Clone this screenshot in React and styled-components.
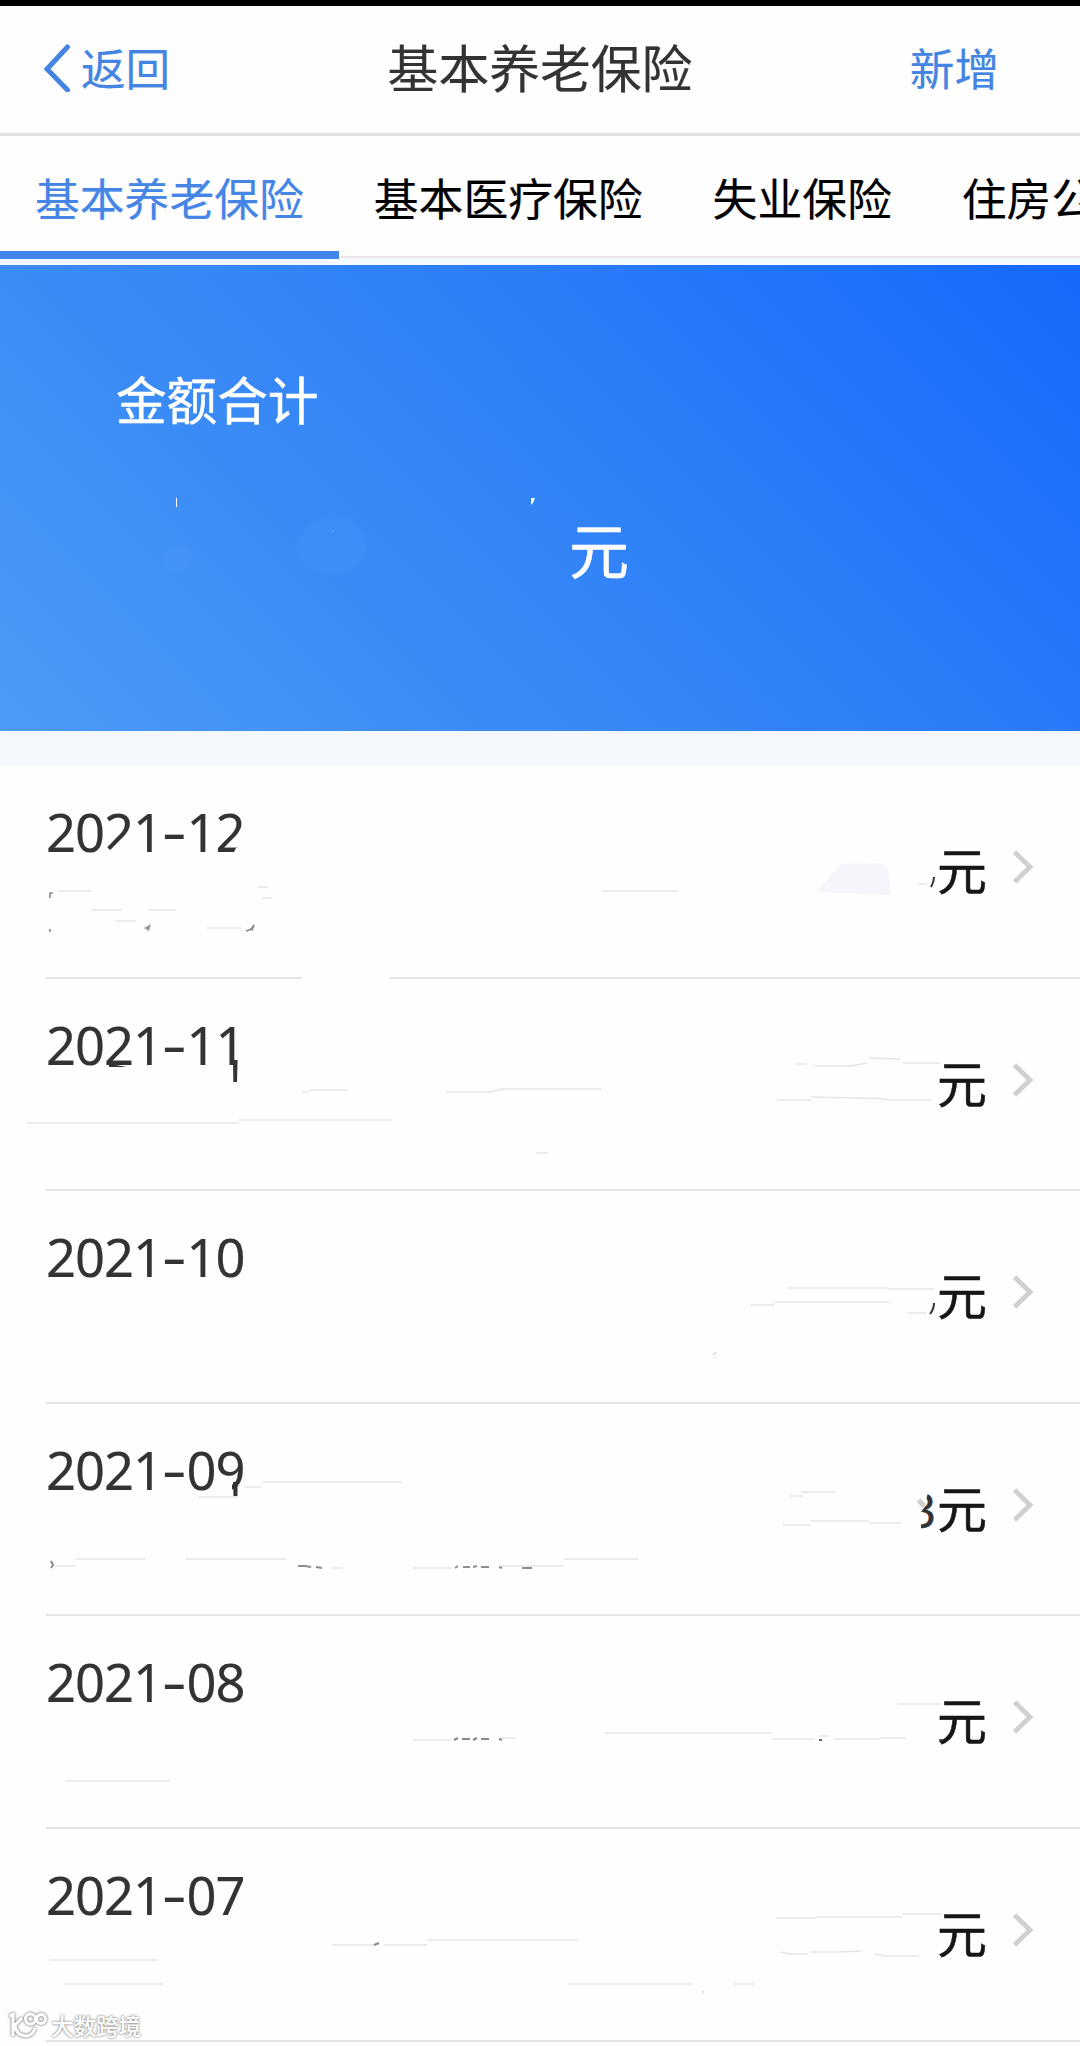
import React from "react";
import styled, { createGlobalStyle } from "styled-components";

const GlobalStyle = createGlobalStyle`
  * { box-sizing: border-box; }
  body {
    margin: 0;
    background: #fefefe;
    font-family: "Noto Sans CJK SC", sans-serif;
    overflow: hidden;
  }
`;

const Page = styled.div`
  position: relative;
  width: 1080px;
  height: 2046px;
  overflow: hidden;
  background: #fefefe;
`;

const StatusStrip = styled.div`
  height: 6px;
  background: #000;
`;

const Header = styled.header`
  display: grid;
  grid-template-columns: 1fr auto 1fr;
  align-items: center;
  height: 130px;
  padding: 0 81px 5px 43px;
  border-bottom: 3px solid #e1e1e1;
`;

const HeaderAction = styled.a`
  display: flex;
  align-items: center;
  justify-self: ${(p) => (p.$end ? "end" : "start")};
  gap: 10px;
  font-size: 44.6px;
  line-height: 60px;
  color: #4484e2;
  -webkit-text-stroke: 0.2px currentColor;
`;

const Title = styled.h1`
  margin: 0 0 3px 38px;
  font-size: 50.8px;
  font-weight: 400;
  line-height: 64px;
  color: #333;
  -webkit-text-stroke: 0.2px currentColor;
`;

const Tabs = styled.nav`
  display: flex;
  height: 122px;
  border-bottom: 2px solid #ece6ec;
`;

const Tab = styled.div`
  flex: none;
  height: 123px;
  padding: 28px 35px 0;
  font-size: 44.8px;
  line-height: 66px;
  white-space: nowrap;
  color: ${(p) => (p.$active ? "#4485e6" : "#000")};
  border-bottom: 8px solid ${(p) => (p.$active ? "#4286ea" : "transparent")};
  -webkit-text-stroke: 0.2px currentColor;
`;

const TabGap = styled.div`
  height: 7px;
  background: #f3f9fc;
`;

const Summary = styled.section`
  position: relative;
  display: flex;
  flex-direction: column;
  height: 466px;
  padding: 97px 116px 0;
  color: #fff;
  background: linear-gradient(45deg, #4c9bf5 0%, #3c8cf6 30%, #2d7ff8 60%, #1569fb 100%);
  -webkit-text-stroke: 0.5px currentColor;
`;

const SummaryLabel = styled.div`
  font-size: 50.6px;
  line-height: 72px;
`;

const SummaryAmount = styled.div`
  margin: 72px 0 0 453px;
  font-size: 60px;
  line-height: 84px;
`;

const Specks = styled.svg`
  position: absolute;
  inset: 0;
`;

const Divider = styled.div`
  height: 35px;
  background: #f4f7fb;
`;

const List = styled.div`
  position: relative;
`;

const Row = styled.article`
  display: flex;
  justify-content: space-between;
  height: 212.6px;
  margin-left: 46px;
  padding-right: 46px;
  border-bottom: 2px solid #e4e4e5;
`;

const Month = styled.div`
  display: flex;
  padding-top: 30px;
  font-family: "Noto Sans", sans-serif;
  font-size: 52.5px;
  line-height: 72px;
  letter-spacing: -1px;
  color: #333;
  -webkit-text-stroke: 0.2px currentColor;
`;

const Dash = styled.span`
  width: 24.4px;
  transform: translate(0, -1px) scaleX(1.45);
  transform-origin: left center;
`;

const Amount = styled.div`
  display: flex;
  align-items: flex-start;
  padding-top: 66px;
  font-size: 50px;
  line-height: 72px;
  color: #161616;
  -webkit-text-stroke: 0.5px currentColor;
`;

const Digit = styled.span`
  margin-right: 1px;
  padding-top: 4px;
  font-family: "Noto Sans", sans-serif;
  font-size: 47px;
  color: #333;
`;

const Arrow = styled.svg`
  margin: 17px 0 0 25px;
`;

const Traces = styled.svg`
  position: absolute;
  left: 0;
  top: 0;
  pointer-events: none;
`;

const Watermark = styled.div`
  position: absolute;
  left: 7px;
  top: 2008px;
  display: flex;
  align-items: center;
  gap: 4px;
  font-size: 22.5px;
  font-weight: 500;
  line-height: 34px;
  color: #fff;
  text-shadow: 0 0 2px #8c8c8c, 0 0 3px #a0a0a0;
`;

const MarkLogo = styled.svg`
  filter: drop-shadow(0 0 1px #8c8c8c) drop-shadow(0 0 1px #b0b0b0);
`;

const tabs = ["基本养老保险", "基本医疗保险", "失业保险", "住房公积金"];

const rows = [
  { year: "2021", month: "12" },
  { year: "2021", month: "11" },
  { year: "2021", month: "10" },
  { year: "2021", month: "09", digit: "3" },
  { year: "2021", month: "08" },
  { year: "2021", month: "07" },
];

const hairlines = [
  "M58 891H91M91 910H122M148 910H176M115 921H136M207 928H241M258 887H268M262 898H272M602 891H678M918 884H927",
  "M796 1064H807M815 1066H850L867 1063M869 1058L900 1059M903 1063H940M777 1100H811M811 1097L879 1098.5L890 1100H932",
  "M27 1123H239M239 1120H392M303 1092H309M309 1090H348M447 1092H490L501 1089H601M536 1153H548",
  "M788 1288H888M888 1289H934M775 1302H889M751 1305H775M907 1313H927",
  "M801 1492H836M790 1496H803M811 1521H869M783 1525H811M869 1523H901",
  "M263 1482H402M244 1487H261M199 1497H238M75 1559H145M55 1566H75M185 1559H286M332 1568H343M413 1568H452M501 1566H564M564 1559H639",
  "M413 1740H451M499 1738H515M65 1781H170M897 1704H941M605 1733H772M772 1739H815M819 1736H829M834 1739H881M881 1738H906",
  "M776 1918H815M815 1917H902M902 1914H942M780 1952L790 1954H808M810 1952H839L861 1951M874 1954L885 1956H919M568 1984H692M734 1984H754",
  "M332 1945H374M384 1945H427M427 1940H578M49 1960H158M64 1984H163",
];

function Chevron() {
  return (
    <Arrow width="22" height="36" viewBox="0 0 22 36" fill="none" stroke="#d0d0d0" strokeWidth="4.8">
      <path d="M2.5 3L18 18L2.5 33" />
    </Arrow>
  );
}

function ListTraces() {
  return (
    <Traces width="1080" height="1280" viewBox="0 766 1080 1280" fill="none">
      <path d="M302 974H390V980H302Z" fill="#fefefe" />
      <path d="M817 892L830 876L842 864L880 863L888 868L891 895Z" fill="#f4f6fb" />
      <path d="M106 846L110 850L115 845.500L133 845V854H106ZM236 848L246 844V854H233Z" fill="#fefefe" />
      <path d="M158 1486L166 1487L170 1492H158ZM219 1482H232V1493H215Z" fill="#fefefe" />
      <path d="M904 1485H930L924 1508L921 1512V1532H904Z" fill="#fefefe" />
      <path d={hairlines.join("")} stroke="#e6e6e6" strokeWidth="1.5" />
      <path d="M50 898V893H53M50 929V932M246 931L252 929L254 925" stroke="#888" strokeWidth="1.6" />
      <path d="M144 928L151 924L149 931Z" fill="#999" />
      <path d="M250 929L254 924L253 931Z" fill="#888" />
      <path d="M934 877Q934 882 931 887M934 1303Q934 1309 930 1314" stroke="#333" strokeWidth="2" />
      <path d="M109 1065H116L127 1067H109Z" fill="#333" />
      <path d="M233 1060H237.6L237 1082H233.3Z" fill="#333" />
      <path d="M233 1482H237.5V1496H233.5Z" fill="#333" />
      <path d="M918.5 1500L924 1506" stroke="#cfcfcf" strokeWidth="5" />
      <path d="M713 1355L716 1352" stroke="#bbb" />
      <path d="M51 1561L53 1565L51 1568M298 1566H305L311 1567M316 1567L322 1568M455 1568L458 1566M463 1567H470M473 1567L477 1566M481 1567H489M522 1568H532M499 1567L502 1568" stroke="#8d8d8d" strokeWidth="2" />
      <path d="M454 1740L458 1738M462 1739H470M473 1740L477 1738M481 1739H489M499 1739L502 1740M374 1945L379 1943" stroke="#888" strokeWidth="2" />
      <path d="M819 1740H822M939 1740H943" stroke="#333" strokeWidth="1.6" />
      <path d="M702 1992H704" stroke="#bbb" />
    </Traces>
  );
}

export default function App() {
  return (
    <Page>
      <GlobalStyle />
      <StatusStrip />
      <Header>
        <HeaderAction>
          <svg width="28" height="50" viewBox="0 0 28 50" fill="none" stroke="#4484e2" strokeWidth="5" strokeLinecap="round">
            <path d="M24.5 5L4 27L24.5 48" />
          </svg>
          返回
        </HeaderAction>
        <Title>基本养老保险</Title>
        <HeaderAction $end>新增</HeaderAction>
      </Header>
      <Tabs>
        {tabs.map((name, i) => (
          <Tab key={name} $active={i === 0}>{name}</Tab>
        ))}
      </Tabs>
      <TabGap />
      <Summary>
        <SummaryLabel>金额合计</SummaryLabel>
        <SummaryAmount>元</SummaryAmount>
        <Specks width="1080" height="466" viewBox="0 265 1080 466" fill="#fff">
          <path d="M176 498H177V507H176Z" />
          <path d="M531 498H535L533 503L531 505Z" />
          <circle cx="332.500" cy="531" r="0.8" opacity="0.6" />
          <circle cx="178" cy="559" r="14" fill="#4b98f7" opacity="0.3" />
          <path d="M295 548Q305 520 332 514Q362 518 368 552Q355 578 325 574Q300 568 295 548Z" fill="#4493f8" opacity="0.35" />
        </Specks>
      </Summary>
      <Divider />
      <List>
        {rows.map((row) => (
          <Row key={row.month}>
            <Month>
              {row.year}
              <Dash>-</Dash>
              {row.month}
            </Month>
            <Amount>
              {row.digit && <Digit>{row.digit}</Digit>}
              元
              <Chevron />
            </Amount>
          </Row>
        ))}
        <ListTraces />
      </List>
      <Watermark>
        <MarkLogo width="40" height="30" viewBox="0 0 40 30" fill="none" stroke="#fff" strokeWidth="3">
          <path d="M2.500 6L6 4.500V26M15 8L8 15Q9 25 18 26Q26 26 28 18" />
          <circle cx="23.500" cy="9" r="5" />
          <circle cx="34" cy="9" r="4.500" />
        </MarkLogo>
        大数跨境
      </Watermark>
    </Page>
  );
}
